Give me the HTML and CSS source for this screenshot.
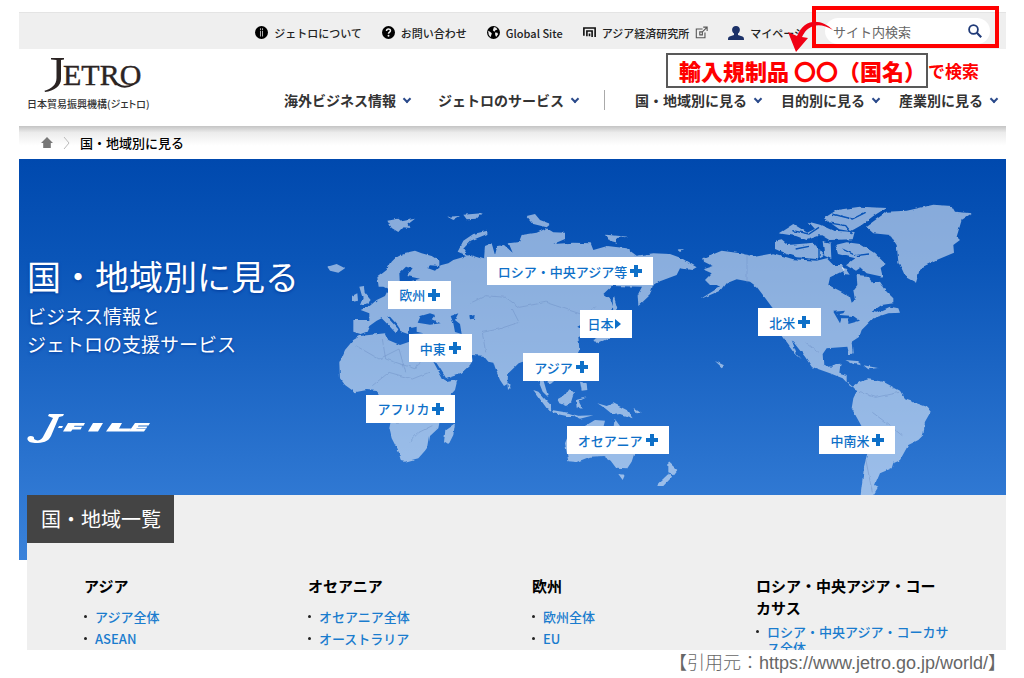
FILE: index.html
```html
<!DOCTYPE html>
<html lang="ja">
  <head>
    <meta charset="UTF-8" />
    <meta name="viewport" content="width=device-width, initial-scale=1.0" />
    <title>国・地域別に見る</title>
    <link rel="stylesheet" href="styles.css">
  </head>
  <body>
    <div class="page">
      <div class="topbar">
        <a href="#" class="topbar-link">
          <svg class="icon" viewBox="0 0 12 12"><circle cx="6" cy="6" r="6" /><path d="M4.6 2h2.8v1.6H4.6zM4.6 4.4h2.8v5.4H4.6z" fill="#ccc" /><path d="M5.4 1.6h1.2v8.8H5.4z" /></svg>
          ジェトロについて
        </a>
        <a href="#" class="topbar-link">
          <svg class="icon" viewBox="0 0 12 12"><circle cx="6" cy="6" r="6" /><path d="M4.2 4.6C4.2 2.2 7.8 2.3 7.8 4.3 7.8 5.6 6 5.6 6 7.2" fill="none" stroke="#eee" stroke-width="1.4" /><circle cx="6" cy="9" r=".9" fill="#eee" /></svg>
          お問い合わせ
        </a>
        <a href="#" class="topbar-link">
          <svg class="icon" viewBox="0 0 12 12"><circle cx="6" cy="6" r="6" /><path d="M6.4 1l2.2.6 1 1.8-1.6.4-1.2 1.4L5.4 4l.4-1.2zM1 4.4l1.8.8 1.6 1.4L4 8.4l-.8 2L1.6 8zM7.4 6l2.2.2.6 1.4-1.8 2.6-.8-2z" fill="#eee" /></svg>
          Global Site
        </a>
        <a href="#" class="topbar-link">
          <svg class="icon" viewBox="0 0 12 12"><path d="M.8 9V1.8h10.400v8.400M3.600 9.500V4.600h4.800v5.600M6 9.500V7" fill="none" stroke="#111" stroke-width="1.500" /></svg>
          アジア経済研究所
          <svg class="icon" viewBox="0 0 12 12"><path d="M7 2.8H1.2v8h8V6M4.4 5.4h2.4v2.8H4.4zM6.8 5.4l4-4M7.6 1h3.6v3.6" fill="none" stroke="#555" /></svg>
        </a>
        <a href="#" class="topbar-link">
          <svg class="icon-user" viewBox="0 0 16 14"><path d="M8 0c5 0 4.600 6 2 7.600V9l4.500 1.600C15.600 11 16 12 16 14H0c0-2 .4-3 1.500-3.400L6 9V7.600C3.400 6 3 0 8 0z" fill="#1c3168" /></svg>
          マイページ
        </a>
        <form class="search">
          <input type="text" class="search-input" placeholder="サイト内検索" aria-label="サイト内検索" />
          <button type="button" class="search-button" aria-label="検索">
            <svg viewBox="0 0 14 14" width="14" height="14"><circle cx="5.500" cy="5.500" r="4.400" fill="none" stroke="#1f3a78" stroke-width="1.800" /><path d="M8.800 8.800l4.400 4.400" stroke="#1f3a78" stroke-width="2.200" /></svg>
          </button>
        </form>
      </div>

      <header class="header">
        <a href="#" class="logo">
          <svg class="logo-mark" viewBox="0 0 100 37" role="img" aria-label="JETRO">
            <text x="20" y="28" font-size="30" fill="#2b2423" stroke="#2b2423" stroke-width=".4" font-family="Liberation Serif, serif">ETRO</text>
            <path d="M8 1h13v1.500l-3 .5v19c0 7-7 12-16 13l-.5-1.200C8 32 13.500 28 13.500 21V3l-5.500-.5z" fill="#2b2423" />
            <path d="M70 22c5 8 12 10 21 5" fill="none" stroke="#2b2423" stroke-width="2" />
          </svg>
          <span class="logo-name">日本貿易振興機構(ジェトロ)</span>
        </a>
        <nav class="nav">
          <ul class="nav-group nav-group-main">
            <li><a href="#">海外ビジネス情報</a></li>
            <li><a href="#">ジェトロのサービス</a></li>
          </ul>
          <ul class="nav-group">
            <li><a href="#">国・地域別に見る</a></li>
            <li><a href="#">目的別に見る</a></li>
            <li><a href="#">産業別に見る</a></li>
          </ul>
        </nav>
      </header>

      <div class="breadcrumb">
        <a href="#" aria-label="ホーム"><svg class="home" viewBox="0 0 12 11"><path d="M6 0l6 6H9.800v5H2.200V6H0z" fill="#777" /></svg></a>
        <svg class="separator" viewBox="0 0 7 12"><path d="M1 0l5 6-5 6" fill="none" stroke="#bbb" /></svg>
        <span>国・地域別に見る</span>
      </div>

      <main class="world">
        <section class="hero">
          <svg class="map" viewBox="0 0 2961 1008" preserveAspectRatio="none" aria-hidden="true">
            <filter id="coast" x="0" y="0" width="100%" height="100%">
              <feTurbulence type="fractalNoise" baseFrequency=".05" numOctaves="2" seed="4" />
              <feDisplacementMap in="SourceGraphic" scale="9" xChannelSelector="R" yChannelSelector="G" />
            </filter>
            <g fill="#fff" fill-opacity=".52" filter="url(#coast)">
              <!-- Europe, Asia, Africa, Oceania -->
              <g transform="translate(903 93)">
                <path fill-rule="evenodd" d="M172 262L200 240 215 215 230 200 250 190 285 182 305 190 335 198 358 212 358 228 330 226 322 234 345 242 362 226 385 220 400 210 450 195 492 208 495 168 515 160 525 195 532 168 552 165 578 188 566 160 597 156 605 135 650 128 680 115 700 127 735 128 735 147 700 162 760 158 812 160 820 180 862 168 920 175 950 197 1000 190 1050 192 1085 205 1130 232 1115 240 1080 235 1070 255 1020 274 998 288 990 315 955 348 953 315 966 290 875 288 850 312 872 328 880 352 855 372 820 375 790 400 770 412 790 425 775 440 778 480 765 508 735 535 710 540 712 565 692 582 670 570 685 622 668 605 655 572 635 545 608 515 596 520 565 550 562 582 552 588 540 570 525 535 520 518 505 515 490 497 455 495 458 512 450 525 425 548 378 564 350 520 340 515 370 570 380 576 412 570 405 600 360 650 350 680 358 700 355 715 330 738 325 768 315 782 295 805 255 815 242 812 238 790 215 745 208 715 212 695 195 650 185 622 170 603 140 600 105 607 75 585 60 565 58 520 75 480 100 450 120 438 195 430 205 450 240 465 268 455 275 432 310 430 290 425 290 410 270 415 264 432 245 425 232 405 210 380 202 382 235 418 228 430 205 405 185 385 170 392 148 408 140 425 122 432 100 425 100 390 148 390 148 370 122 360 150 347 170 330 195 318 205 298 190 290 176 290zM258 230L278 234 262 258 300 266 262 276 240 290 238 250zM293 398L302 378 330 370 345 375 335 388 362 400 330 404zM392 378L415 370 405 390 420 402 425 432 405 426 400 400zM448 376L464 372 462 386 450 388z" />
                <path d="M22 230L50 222 75 235 55 248 30 242zM118 290L132 288 134 308 152 330 148 340 120 345 128 325zM96 318L112 310 114 332 96 336zM502 122L460 132 430 152 413 185 445 198 430 176 452 152 502 132zM202 92L235 86 245 94 285 86 262 104 272 114 248 112 235 126 215 114zM382 80L420 78 400 90zM430 74L485 70 470 86 440 88zM620 78L645 72 660 90 692 102 680 112 640 102zM858 134L925 140 890 144 892 158 870 152z" />
                <path d="M405 700L400 735 385 765 372 757 376 720zM562 578L572 592 564 600zM640 600L655 605 692 645 694 662 680 655zM695 660L745 668 775 678 740 678 700 670zM712 628L735 615 748 595 762 608 752 640 738 648 718 640zM768 630L800 622 776 634 788 657 774 650 770 657zM780 575L800 580 802 600 785 602zM832 640L860 648 880 640 920 660 938 685 900 672 880 675 855 655zM940 653L962 668 950 670zM760 678L820 676 780 686zM882 320L892 355 880 370 878 330zM820 450L870 430 882 400 880 440 830 462z" />
                <path d="M735 760L745 735 800 705 825 690 855 692 850 712 880 718 884 686 900 708 938 740 948 775 935 815 920 838 890 836 872 812 850 798 810 800 770 816 745 814zM895 852L915 854 908 870zM1045 815L1072 840 1060 856 1045 850zM1045 852L1015 880 1012 888 1030 888 1055 862z" />
              </g>
              <!-- Americas and Greenland -->
              <g transform="translate(1923 93)">
                <path fill-rule="evenodd" d="M130 205L185 182 240 190 285 200 340 190 400 208 470 212 500 205 520 225 545 225 555 240 510 262 505 285 545 305 570 320 575 338 585 330 580 300 592 285 590 255 625 258 640 280 660 275 680 305 700 325 700 340 665 345 635 365 650 368 690 350 715 355 720 368 685 370 640 385 605 420 598 440 575 455 578 490 568 495 562 470 500 475 488 492 490 522 510 534 525 520 542 518 538 548 560 555 560 575 578 590 600 575 625 568 670 575 720 602 735 628 800 650 812 665 795 695 790 735 775 750 745 765 720 810 700 818 695 835 660 850 645 885 655 890 640 915 602 915 612 830 622 790 608 715 575 655 580 625 592 600 570 588 548 565 510 550 455 530 435 500 395 450 410 490 425 508 405 490 365 435 335 350 290 290 270 275 230 268 200 280 185 300 120 328 180 290 170 285 150 285 135 270 155 250 128 238 158 228 132 215zM520 365L555 362 550 370 530 374 580 378 600 392 565 402 565 385 545 385 540 400z" />
                <path d="M345 152L365 148 385 165 460 158 492 195 470 207 410 202 380 192 345 177zM356 130L400 102 442 128 470 114 484 135 440 150 408 138zM446 95L480 104 520 122 584 126 578 148 508 150 478 132zM492 85L530 60 600 50 678 54 640 78 604 106 572 124 538 118zM526 165L560 157 600 162 642 188 677 222 662 234 668 260 620 250 600 232 585 242 558 226 586 205 534 192zM488 153L512 158 514 207 493 197zM545 233L560 236 572 254 550 252z" />
                <path d="M618 110L680 65 740 62 820 44 875 48 885 65 935 70 905 90 890 140 900 150 880 165 882 188 830 210 780 235 768 278 735 260 715 215 710 165 690 135 640 130zM556 510L590 513 607 526 580 522zM610 526L654 534 625 538zM50 178L72 178 60 186zM165 513L192 526 185 532z" />
              </g>
            </g>
            <g fill="none" stroke="#6f92c8" stroke-opacity=".5" stroke-width="3" filter="url(#coast)">
              <path d="M1353 433L1400 410 1460 415 1500 445 1580 430 1640 450 1700 470 1730 440M1480 450L1500 490 1440 510 1390 520 1400 580M1010 560L1080 600 1140 570 1160 640M1090 540L1100 600 1190 630 1230 560M1060 680L1110 640 1180 660 1230 640M1130 790L1210 780 1260 770M1170 850L1200 820 1240 800M2184 285V370M2360 550L2400 580M2520 700L2570 715 2640 700M2560 760L2600 790 2650 830M2540 900L2560 1000" />
            </g>
            <!-- channels between the arctic islands -->
            <g fill="none" stroke="#0852b6" stroke-width="4" filter="url(#coast)">
              <path d="M2320 215L2370 225 2400 205M2420 190L2480 200 2500 225M2440 165L2500 180 2540 160M2470 270L2510 290 2550 285M2330 270L2370 262M2400 225V300" />
            </g>
          </svg>
          <div class="hero-text">
            <h1>国・地域別に見る</h1>
            <p>ビジネス情報と<br />ジェトロの支援サービス</p>
            <svg class="jfile" viewBox="0 0 124 30" role="img" aria-label="J-FILE">
              <g fill="#fff">
                <path d="M22 0h15l-1 2-4 1-8 19c-3 6-8 7-16 7-6 0-9-3-7-6 2-2 7-1 6 2 4 3 8 1 10-4l9-17-5-2zM32 12h4l-1 2h-4z" />
                <path d="M41 9h17l-1.500 2.800H47.500l-.5 1H55L53.600 15.400h-8.200L44 17.500h-8zM66 9h10l-5 8.500H61zM85 9h10l-3 5.500H104L102 17.500H79zM108 9h15l-1.500 2.400h-10l-.6 1h9.500l-1.200 2h-9.500l-.4.600h9.500L117 17.500H102z" />
              </g>
            </svg>
          </div>
          <a href="#" class="pin pin-russia">ロシア・中央アジア等</a>
          <a href="#" class="pin pin-europe">欧州</a>
          <a href="#" class="pin pin-middle-east">中東</a>
          <a href="#" class="pin pin-japan">日本</a>
          <a href="#" class="pin pin-asia">アジア</a>
          <a href="#" class="pin pin-africa">アフリカ</a>
          <a href="#" class="pin pin-oceania">オセアニア</a>
          <a href="#" class="pin pin-north-america">北米</a>
          <a href="#" class="pin pin-latin-america">中南米</a>
        </section>

        <section class="regions">
          <h2>国・地域一覧</h2>
          <div class="region-list">
            <div class="region">
              <h3>アジア</h3>
              <ul>
                <li><a href="#">アジア全体</a></li>
                <li><a href="#">ASEAN</a></li>
              </ul>
            </div>
            <div class="region">
              <h3>オセアニア</h3>
              <ul>
                <li><a href="#">オセアニア全体</a></li>
                <li><a href="#">オーストラリア</a></li>
              </ul>
            </div>
            <div class="region">
              <h3>欧州</h3>
              <ul>
                <li><a href="#">欧州全体</a></li>
                <li><a href="#">EU</a></li>
              </ul>
            </div>
            <div class="region">
              <h3>ロシア・中央アジア・コーカサス</h3>
              <ul>
                <li><a href="#">ロシア・中央アジア・コーカサス全体</a></li>
              </ul>
            </div>
          </div>
        </section>
      </main>

      <p class="source">【引用元：https://www.jetro.go.jp/world/】</p>

      <div class="search-frame"></div>
      <div class="note">
        <strong>輸入規制品 〇〇（国名）</strong>
        <span>で検索</span>
      </div>
      <svg class="note-arrow" viewBox="0 0 48 32" aria-hidden="true"><path d="M47 10C36-1 19-3 11 16L2 12l8 20 12-14-6-1C22 4 34 2 47 10z" fill="#f00014" /></svg>
    </div>
  </body>
</html>
```
FILE: styles.css
```css
*,
*::before,
*::after {
  box-sizing: border-box;
}
body {
  margin: 0;
  background: #fff;
  color: #222;
  font-family: "Noto Sans CJK JP", sans-serif;
  font-size: 13px;
}
h1,
h2,
h3,
p,
ul {
  margin: 0;
  padding: 0;
}
ul {
  list-style: none;
}
a {
  color: inherit;
  text-decoration: none;
}
svg {
  display: block;
}
.page {
  position: relative;
  padding: 12px 18px 0 19px;
}

/* top bar */
.topbar {
  display: flex;
  align-items: center;
  justify-content: flex-end;
  gap: 20px;
  height: 37px;
  padding-right: 16px;
  border-top: 1px solid #e4e4e4;
  background: #efefef;
}
.topbar-link {
  display: flex;
  align-items: center;
  gap: 6px;
  padding-top: 3px;
  font-size: 11px;
  font-weight: 500;
  line-height: 16px;
  white-space: nowrap;
}
.icon {
  width: 13px;
  height: 13px;
}
.icon-user {
  width: 16px;
  height: 14px;
}
.search {
  display: flex;
  align-items: center;
  width: 165px;
  height: 26px;
  padding: 0 8px;
  border-radius: 13px;
  background: #fff;
}
.search-input {
  flex: auto;
  min-width: 0;
  padding: 0;
  border: none;
  background: none;
  font: 13px "Noto Sans CJK JP", sans-serif;
}
.search-input::placeholder {
  color: #666;
}
.search-button {
  padding: 0;
  border: none;
  background: none;
}

/* header */
.header {
  display: flex;
  align-items: flex-start;
  justify-content: space-between;
  height: 77px;
  padding: 8px 7px 0 8px;
}
.logo-mark {
  width: 100px;
  height: 37px;
  margin-left: 16px;
}
.logo-name {
  display: block;
  color: #333;
  font-size: 10px;
  font-weight: 500;
  font-feature-settings: "palt";
  line-height: 20px;
}
.nav {
  display: flex;
  align-items: center;
  padding-top: 33px;
  color: #333;
  font-size: 14px;
  font-weight: bold;
  line-height: 20px;
  white-space: nowrap;
}
.nav-group {
  display: flex;
  gap: 18px;
}
.nav-group-main {
  gap: 26px;
  margin-right: 30px;
  padding-right: 24px;
  border-right: 1px solid #aaa;
}
.nav-group a {
  display: flex;
  align-items: center;
  gap: 8px;
}
.nav-group a::after {
  content: "";
  width: 6px;
  height: 6px;
  margin: 0 2px 2px 0;
  border: solid #2b4a8b;
  border-width: 0 2px 2px 0;
  transform: rotate(45deg);
}

.breadcrumb {
  display: flex;
  align-items: center;
  gap: 10px;
  height: 33px;
  padding-left: 22px;
  background: linear-gradient(#c4c4c4, #ececec 20%, #fff 60%);
  color: #000;
  font-weight: 500;
}
.home {
  width: 12px;
  height: 11px;
}
.separator {
  width: 7px;
  height: 12px;
}

/* world map */
.world {
  background: linear-gradient(#0049ae, #0a55b8 25%, #3a82da) no-repeat;
  background-size: 100% 401px;
}
.hero {
  position: relative;
  height: 336px;
  padding: 91px 0 0 8px;
}
.map {
  position: absolute;
  top: 0;
  left: 0;
  width: 100%;
  height: 100%;
}
.hero-text {
  position: relative;
  color: #fff;
  text-shadow: 0 1px 3px #003a9b;
}
.hero-text h1 {
  font-size: 34px;
  font-weight: normal;
  line-height: 52px;
}
.hero-text p {
  font-size: 19px;
  line-height: 28px;
}
.jfile {
  width: 124px;
  height: 30px;
  margin-top: 56px;
}
.pin {
  position: absolute;
  display: flex;
  align-items: center;
  gap: 3px;
  height: 28px;
  padding: 0 11px;
  background: #fff;
  color: #0e70c8;
  font-weight: 500;
  white-space: nowrap;
}
.pin::after {
  content: "";
  width: 12px;
  height: 12px;
  background:
    linear-gradient(#0e70c8, #0e70c8) center / 4px 12px no-repeat,
    linear-gradient(#0e70c8, #0e70c8) center / 12px 4px no-repeat;
}
.pin-russia {
  left: 47.4%;
  top: 29.2%;
}
.pin-europe {
  left: 37.4%;
  top: 36.3%;
}
.pin-middle-east {
  left: 39.5%;
  top: 52.1%;
}
.pin-japan {
  left: 56.8%;
  top: 44.8%;
  gap: 1px;
  padding-left: 8px;
}
.pin-japan::after {
  width: 6px;
  height: 10px;
  border: solid transparent;
  border-width: 5px 0 5px 6px;
  border-left-color: #0e70c8;
  background: none;
}
.pin-asia {
  left: 51.1%;
  top: 57.8%;
}
.pin-africa {
  left: 35.2%;
  top: 70.2%;
}
.pin-oceania {
  left: 55.5%;
  top: 79.6%;
}
.pin-north-america {
  left: 74.9%;
  top: 44.4%;
}
.pin-latin-america {
  left: 81.1%;
  top: 79.6%;
}

/* region list */
.regions {
  max-height: 155px;
  margin-left: 8px;
  overflow: hidden;
  background: #efefef;
}
.regions h2 {
  width: fit-content;
  padding: 0 13px 0 14px;
  background: #444;
  color: #fff;
  font-size: 20px;
  font-weight: normal;
  line-height: 48px;
}
.region-list {
  display: grid;
  grid-template-columns: repeat(4, 1fr);
  padding: 32px 26px 0 57px;
}
.region {
  padding-right: 30px;
}
.region h3 {
  min-height: 29px;
  margin-bottom: 5px;
  color: #000;
  font-size: 15px;
  line-height: 22px;
}
.region li {
  position: relative;
  margin-bottom: 6px;
  padding-left: 11px;
  color: #1a7cce;
  font-weight: 500;
  line-height: 16px;
}
.region li::before {
  content: "";
  position: absolute;
  top: 6px;
  left: 0;
  width: 3px;
  height: 3px;
  border-radius: 50%;
  background: #222;
}

.source {
  color: #666;
  font-family: "Liberation Sans", "Noto Sans CJK JP", sans-serif;
  font-size: 18px;
  font-weight: 300;
  line-height: 26px;
  text-align: right;
}

/* marks drawn over the page */
.search-frame {
  position: absolute;
  top: 6px;
  right: 25px;
  width: 187px;
  height: 42px;
  border: 4px solid #f00;
}
.note {
  position: absolute;
  top: 53px;
  right: 45px;
  display: flex;
  align-items: center;
  color: #f00;
  font-size: 17px;
  font-weight: bold;
  white-space: nowrap;
}
.note strong {
  padding-left: 11px;
  border: 2px solid #595959;
  background: #fff;
  font-size: 22px;
  line-height: 31px;
}
.note-arrow {
  position: absolute;
  top: 20px;
  right: 190px;
  width: 48px;
  height: 32px;
}
```
